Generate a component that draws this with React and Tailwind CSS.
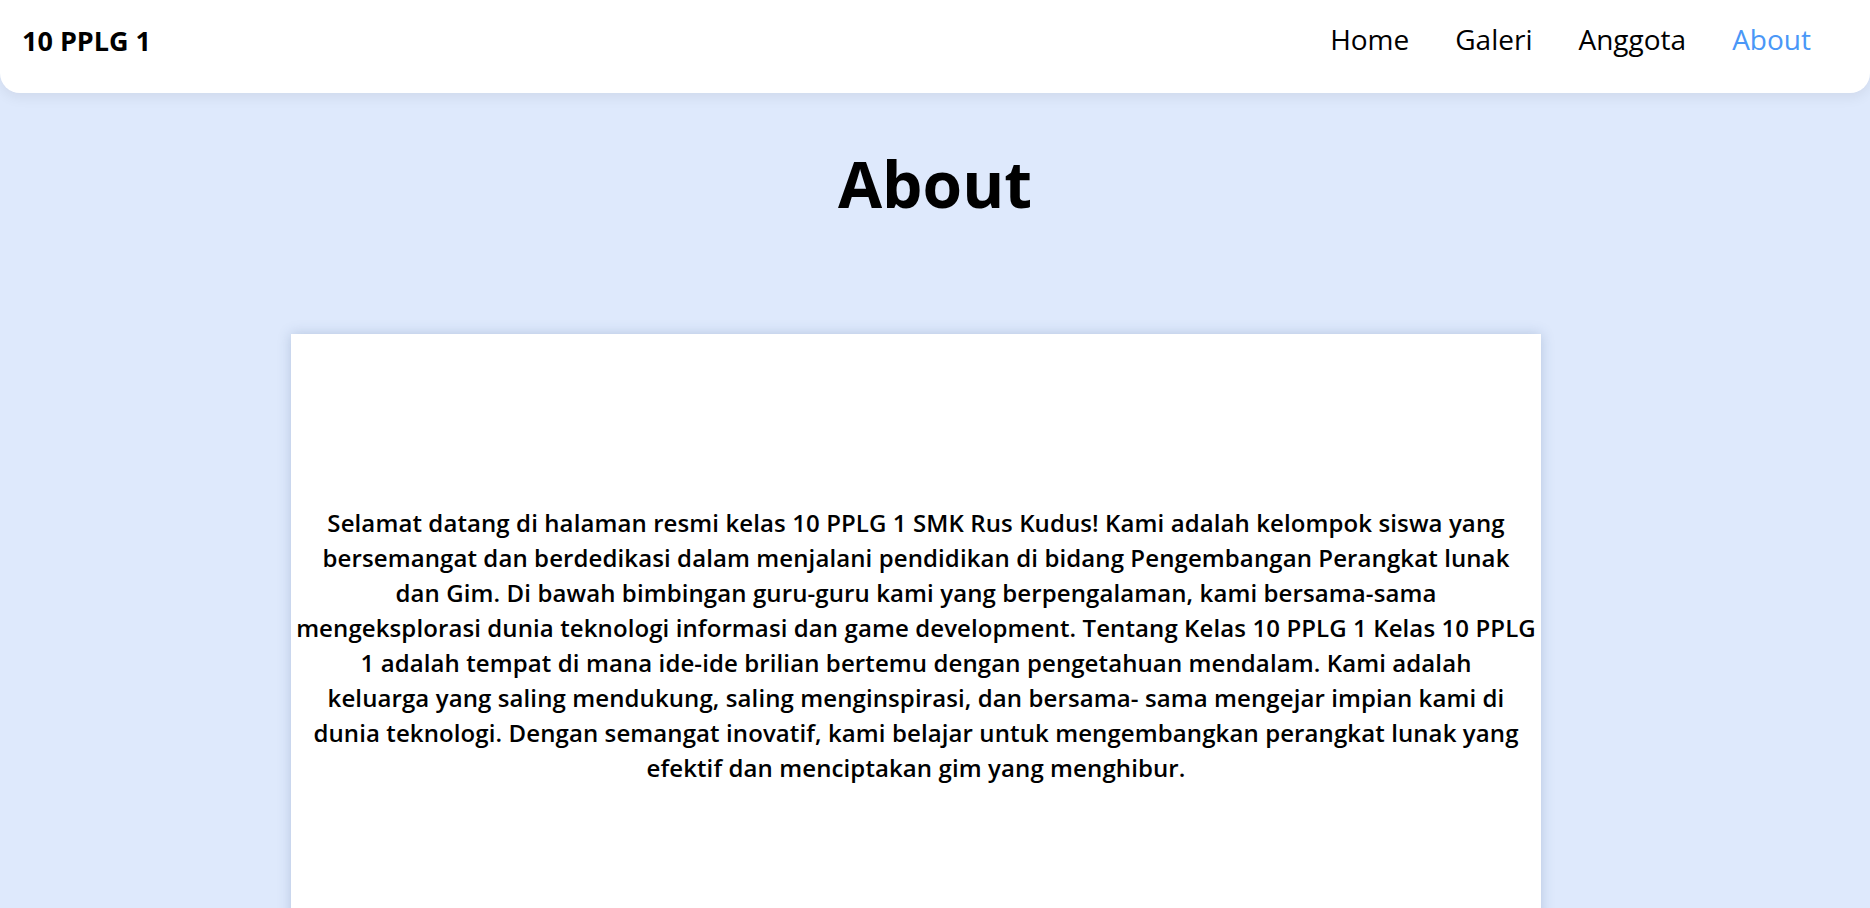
import React from 'react';

const LINKS = ['Home', 'Galeri', 'Anggota', 'About'];

// baris-baris teks mengikuti pemenggalan pada desain
const ABOUT_LINES = [
  'Selamat datang di halaman resmi kelas 10 PPLG 1 SMK Rus Kudus! Kami adalah kelompok siswa yang',
  'bersemangat dan berdedikasi dalam menjalani pendidikan di bidang Pengembangan Perangkat lunak',
  'dan Gim. Di bawah bimbingan guru-guru kami yang berpengalaman, kami bersama-sama',
  'mengeksplorasi dunia teknologi informasi dan game development. Tentang Kelas 10 PPLG 1 Kelas 10 PPLG',
  '1 adalah tempat di mana ide-ide brilian bertemu dengan pengetahuan mendalam. Kami adalah',
  'keluarga yang saling mendukung, saling menginspirasi, dan bersama- sama mengejar impian kami di',
  'dunia teknologi. Dengan semangat inovatif, kami belajar untuk mengembangkan perangkat lunak yang',
  'efektif dan menciptakan gim yang menghibur.',
];

export default function App() {
  return (
    <div className="min-h-[908px] bg-[#dee9fc] font-['Open_Sans',sans-serif] text-black">
      {/* Navbar */}
      <nav className="h-[93px] flex items-center justify-between pl-[22px] pr-[59px] bg-white rounded-b-[20px] shadow-[0_4px_14px_rgba(0,0,0,0.07)]">
        <span className="text-[27px] font-bold mb-[10px]">10 PPLG 1</span>
        <ul className="flex items-center gap-[46px] mb-[16px]">
          {LINKS.map((l) => (
            <li key={l} className={`text-[28px] ${l === 'About' ? 'text-[#4a97f7]' : 'text-black'}`}>
              {l}
            </li>
          ))}
        </ul>
      </nav>

      {/* Judul */}
      <h1 className="mt-[59px] text-center text-[64px] leading-[64px] font-bold">About</h1>

      {/* Kartu */}
      <div className="mt-[118px] ml-[291px] w-[1250px] bg-white shadow-[0_0_12px_rgba(60,90,140,0.25)] pt-[171px] pb-[172px]">
        <p className="text-center text-[24px] leading-[35px] font-semibold tracking-[0.1px]">
          {ABOUT_LINES.map((line, i) => (
            <React.Fragment key={i}>
              {line}
              {i < ABOUT_LINES.length - 1 && <br />}
            </React.Fragment>
          ))}
        </p>
      </div>
    </div>
  );
}
